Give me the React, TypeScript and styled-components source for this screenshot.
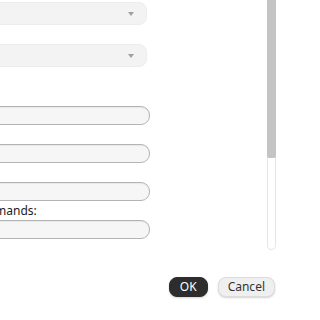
import React from 'react';
import styled, { createGlobalStyle } from 'styled-components';

const GlobalStyle = createGlobalStyle`
  html, body {
    margin: 0;
    padding: 0;
    background: #ffffff;
    font-family: "Noto Sans", "Open Sans", sans-serif;
    font-size: 12px;
    color: #333;
    overflow: hidden;
  }
`;

const Page = styled.div`
  width: 320px;
  height: 320px;
  overflow: hidden;
  display: flex;
  flex-direction: column;
`;

const Body = styled.div`
  display: flex;
  height: 250px;
`;

const Form = styled.div`
  margin-left: -40px;
  width: 190px;
  padding-top: 2px;
  display: flex;
  flex-direction: column;
`;

const Field = styled.div<{ $gap?: number }>`
  display: flex;
  flex-direction: column;
  margin-top: ${(p) => p.$gap || 0}px;
`;

const Label = styled.label<{ $indent?: number }>`
  height: 19px;
  line-height: 20px;
  padding-left: ${(p) => p.$indent || 0}px;
  white-space: nowrap;
  color: #222;
`;

const SelectBox = styled.div`
  width: 187px;
  height: 23px;
  box-sizing: border-box;
  background: #f3f3f3;
  border: 1px solid #ededed;
  border-radius: 8px;
  display: flex;
  align-items: center;
  justify-content: flex-end;
  padding-right: 12px;
`;

const Arrow = styled.span`
  width: 0;
  height: 0;
  border-left: 3px solid transparent;
  border-right: 3px solid transparent;
  border-top: 4px solid #a0a0a0;
`;

const Input = styled.div`
  width: 190px;
  height: 19px;
  box-sizing: border-box;
  background: #f6f6f6;
  border: 1px solid #b4b4b4;
  border-radius: 9px;
  box-shadow: inset 0 1px 1px rgba(0, 0, 0, 0.06);
`;

const Scrollbar = styled.div`
  margin-left: 117px;
  width: 9px;
  height: 250px;
  box-sizing: border-box;
  border: 1px solid #e6e6e6;
  border-top: none;
  border-radius: 0 0 5px 5px;
  background: #fff;
  display: flex;
  flex-direction: column;
`;

const Thumb = styled.div`
  margin: 0 -1px;
  height: 158px;
  background: #c4c4c4;
  border-radius: 0 0 2px 2px;
`;

const Footer = styled.div`
  display: flex;
  justify-content: flex-end;
  gap: 10px;
  padding: 27px 45px 0 0;
`;

const Button = styled.button<{ $primary?: boolean }>`
  height: 20px;
  padding: 0 ${(p) => (p.$primary ? 10 : 9)}px;
  box-sizing: border-box;
  border-radius: 8px;
  font-family: "Noto Sans", "Open Sans", sans-serif;
  font-size: 12px;
  line-height: 18px;
  cursor: pointer;
  background: ${(p) => (p.$primary ? '#2d2d2d' : '#efefef')};
  color: ${(p) => (p.$primary ? '#fff' : '#333')};
  border: 1px solid ${(p) => (p.$primary ? '#2d2d2d' : '#dcdcdc')};
  box-shadow: 0 1px 2px rgba(0, 0, 0, 0.18);
`;

export default function App() {
  return (
    <Page>
      <GlobalStyle />
      <Body>
        <Form>
          <SelectBox><Arrow /></SelectBox>
          <Field>
            <Label />
            <SelectBox><Arrow /></SelectBox>
          </Field>
          <Field $gap={20}>
            <Label />
            <Input />
          </Field>
          <Field>
            <Label />
            <Input />
          </Field>
          <Field>
            <Label />
            <Input />
          </Field>
          <Field>
            <Label $indent={9}>Commands:</Label>
            <Input />
          </Field>
        </Form>
        <Scrollbar>
          <Thumb />
        </Scrollbar>
      </Body>
      <Footer>
        <Button $primary>OK</Button>
        <Button>Cancel</Button>
      </Footer>
    </Page>
  );
}
